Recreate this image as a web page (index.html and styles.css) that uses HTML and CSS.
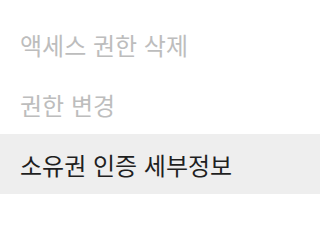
FILE: index.html
```html
<!DOCTYPE html>
<html lang="ko">
<head>
<meta charset="utf-8">
<link rel="stylesheet" href="styles.css">
</head>
<body>
<ul class="menu">
  <li class="item disabled">액세스 권한 삭제</li>
  <li class="item disabled">권한 변경</li>
  <li class="item active">소유권 인증 세부정보</li>
</ul>
</body>
</html>
```
FILE: styles.css
```css
html, body {
  margin: 0;
  padding: 0;
  background: #ffffff;
}
.menu {
  list-style: none;
  margin: 0;
  padding: 14px 0 11px 0;
  font-family: "Noto Sans CJK KR", "Noto Sans", sans-serif;
  font-size: 24px;
}
.item {
  height: 60px;
  display: flex;
  align-items: center;
  padding-left: 20px;
  white-space: nowrap;
}
.disabled {
  color: #bdbdbd;
}
.active {
  color: #1f1f1f;
  background: #eeeeee;
}
```
